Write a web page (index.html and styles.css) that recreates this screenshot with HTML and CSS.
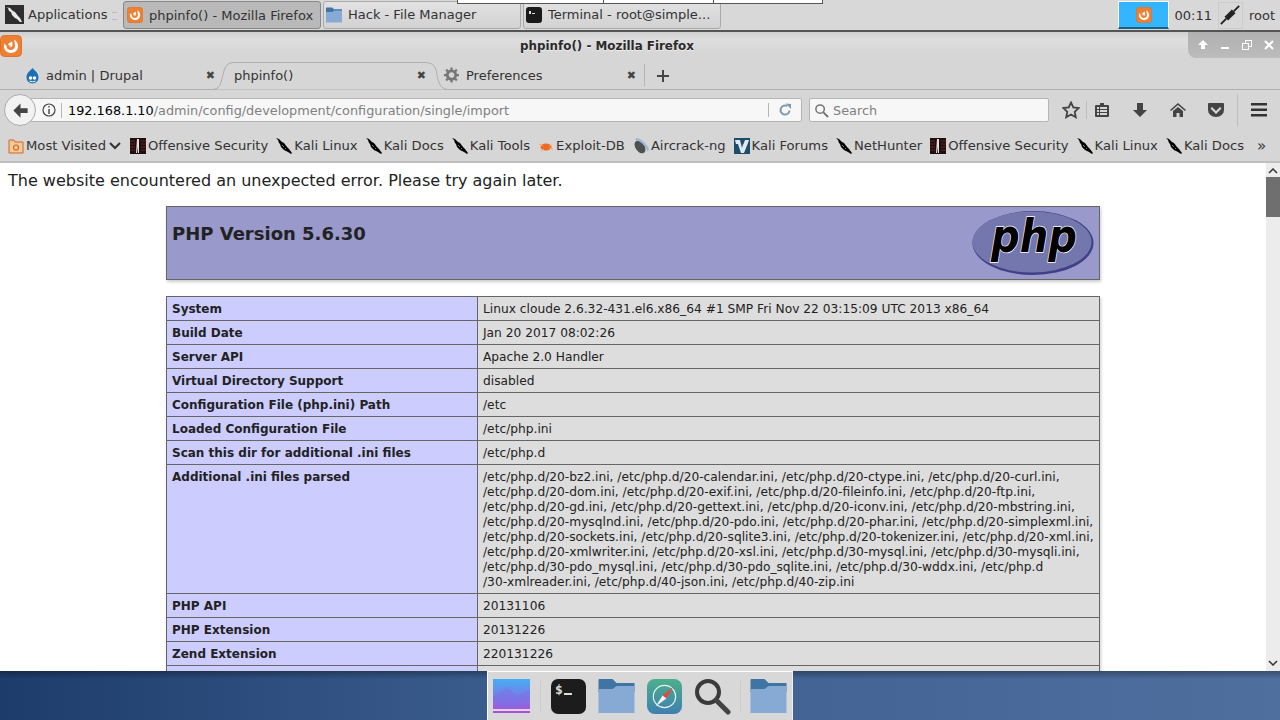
FILE: index.html
```html
<!DOCTYPE html>
<html lang="en">
<head>
  <meta charset="UTF-8" />
  <title>phpinfo() - Mozilla Firefox</title>
  <link rel="stylesheet" href="styles.css">
</head>
<body>

  <!-- shared icons -->
  <svg class="defs" width="0" height="0">
    <symbol id="fox" viewBox="0 0 22 22">
      <rect x="0.5" y="0.5" width="21" height="21" rx="4" fill="#ee8034" stroke="#dd7428"/>
      <path d="M14 4.500c2.500 1.500 4 3.800 4 6.800 0 4-3.200 6.700-7 6.700-3.500 0-6.200-2.300-7-5.500-.3-1.500 0-3 .8-4.200.2 1.300.8 2 1.700 2.300-.2 2.500 1.500 4.500 4.300 4.500 2.500 0 4.200-1.800 4.200-4 0-2.500-.7-4.800-1-6.600z" fill="#fff"/>
      <path d="M8 9.500c1-1.500 2.500-2.500 4-3 .5 1.500 1 3 .3 4.500-.8 1.300-2.500 1.500-3.500.8 1.200 0 2-.5 2.300-1.300-1 .3-2 .2-2.800-1z" fill="#fff"/>
    </symbol>
    <symbol id="kali" viewBox="0 0 16 16">
      <path d="M0 0l3 1 3 3 2 1 3 4 2 2 3 4-1 1-3-2-2-1-2-1-3-3-1-3-1-1-1-3z" fill="#000"/>
      <path d="M6 7l2 2M9 10l1 1" stroke="#999" stroke-width="0.800"/>
    </symbol>
    <symbol id="offsec" viewBox="0 0 16 16">
      <rect width="16" height="16" fill="#1c0f0f"/>
      <path d="M0 3h5M0 6h5M0 9h5M0 12h5M11 3h5M11 6h5M11 9h5M11 12h5" stroke="#6e2020"/>
      <path d="M7 1h2v14H8l-.5-6L7 15H6z" fill="#e8e0e0"/>
    </symbol>
    <symbol id="folder" viewBox="0 0 36 34">
      <path d="M0 1a1 1 0 0 1 1-1h13l4 4h18v9H0z" fill="#3f74a3"/>
      <path d="M0 10h14l4-3h18v27H0z" fill="#86aad4"/>
    </symbol>
  </svg>

  <!-- desktop panel -->
  <div class="panel">
    <div class="apps">
      <svg class="apps-icon" viewBox="0 0 19 19">
        <rect width="19" height="19" fill="#2e2e2e"/>
        <path d="M1 2l4 1 3 3 2 1 3 4 2 2 2 4-2 0-3-3-2-1-3-3-1-3-2-1-1-3z" fill="#e8e8e8"/>
      </svg>
      <span>Applications</span>
    </div>
    <span class="grip"></span>
    <div class="task active">
      <svg class="task-icon"><use href="#fox"/></svg>
      <span>phpinfo() - Mozilla Firefox</span>
    </div>
    <div class="task">
      <svg class="task-icon"><use href="#folder"/></svg>
      <span>Hack - File Manager</span>
    </div>
    <div class="task">
      <svg class="task-icon" viewBox="0 0 16 16">
        <rect width="16" height="16" rx="3" fill="#1a1a1a"/>
        <path d="M3 4h2v3H3zM6 6h3v1H6z" fill="#ddd"/>
      </svg>
      <span>Terminal - root@simple...</span>
    </div>
    <div class="tray">
      <div class="pager"><svg class="task-icon"><use href="#fox"/></svg></div>
      <span class="clock">00:11</span>
      <div class="plug">
        <svg viewBox="0 0 24 24" width="22" height="22">
          <path d="M2 22l6-6M16 8l6-6" stroke="#222" stroke-width="2"/>
          <path d="M6 14l4-4 4 4-4 4z M10 10l4-4 4 4-4 4z" fill="#222"/>
        </svg>
      </div>
      <span class="user">root</span>
    </div>
    <div class="popup-edge">
      <i></i><i></i>
    </div>
  </div>

  <!-- firefox window -->
  <div class="window">
    <div class="titlebar">
      <svg class="win-icon"><use href="#fox"/></svg>
      <span class="win-title">phpinfo() - Mozilla Firefox</span>
      <div class="win-btns">
        <svg viewBox="0 0 12 12" width="12" height="12"><path d="M6 1l5 5H8v4H4V6H1z" fill="#fff"/></svg>
        <svg viewBox="0 0 12 12" width="12" height="12"><path d="M2 8h8v2H2z" fill="#fff"/></svg>
        <svg viewBox="0 0 12 12" width="12" height="12"><path d="M4 1h7v7H8v3H1V4h3zM5 2v2h3v3h2V2zM2 5v5h5V5z" fill="#fff"/></svg>
        <svg viewBox="0 0 12 12" width="12" height="12"><path d="M2 2l8 8M10 2l-8 8" stroke="#fff" stroke-width="2"/></svg>
      </div>
    </div>

    <div class="tabs">
      <svg class="tab-shape" viewBox="0 0 240 28" width="240" height="28">
        <path d="M0 27.500c9 0 9-8 11-15C13 4 15 .5 23 .5h190c8 0 11 4 12 12 1 8 4 15 11 15" fill="#d6d6d6" stroke="#aeaeae"/>
      </svg>
      <div class="tab tab-first">
        <svg class="tab-icon" viewBox="0 0 14 16">
          <path d="M7 0c1 2 6 4 6 9.500A6 6 0 0 1 1 9.500C1 4 6 2 7 0z" fill="#1a6fb5"/>
          <circle cx="5" cy="10" r="1.800" fill="#fff"/><circle cx="9" cy="10" r="1.800" fill="#fff"/>
          <path d="M4 13c2 1 4 1 6 0" stroke="#fff" fill="none"/>
        </svg>
        <span class="tab-label">admin | Drupal</span>
        <span class="tab-close">✖</span>
      </div>
      <div class="tab tab-active">
        <span class="tab-label">phpinfo()</span>
        <span class="tab-close">✖</span>
      </div>
      <div class="tab tab-prefs">
        <svg class="tab-icon" viewBox="0 0 16 16">
          <circle cx="8" cy="8" r="4.500" fill="none" stroke="#777" stroke-width="3"/>
          <path d="M8 0v3M8 13v3M0 8h3M13 8h3M2.300 2.300l2 2M11.700 11.700l2 2M13.700 2.300l-2 2M4.300 11.700l-2 2" stroke="#777" stroke-width="2.400"/>
        </svg>
        <span class="tab-label">Preferences</span>
        <span class="tab-close">✖</span>
      </div>
      <div class="tab-new">
        <svg viewBox="0 0 14 14" width="14" height="14"><path d="M7 1v12M1 7h12" stroke="#444" stroke-width="2"/></svg>
      </div>
    </div>

    <div class="navbar">
      <div class="back">
        <svg viewBox="0 0 16 16" width="19" height="19"><path d="M8 2L2 8l6 6v-4h6V6H8z" fill="#444"/></svg>
      </div>
      <div class="urlbar">
        <svg class="info" viewBox="0 0 14 14" width="14" height="14">
          <circle cx="7" cy="7" r="6" fill="none" stroke="#444" stroke-width="1.200"/>
          <path d="M6.300 3h1.400v1.500H6.300zM6.300 6h1.400v5H6.300z" fill="#444"/>
        </svg>
        <span class="url"><b>192.168.1.10</b>/admin/config/development/configuration/single/import</span>
        <svg class="reload" viewBox="0 0 14 14" width="14" height="14">
          <path d="M11.500 7.500A4.500 4.500 0 1 1 9 3" fill="none" stroke="#7f99b3" stroke-width="2"/>
          <path d="M7.500 0.500L13 1v5z" fill="#7f99b3"/>
        </svg>
      </div>
      <div class="searchbar">
        <svg viewBox="0 0 16 16" width="15" height="15">
          <circle cx="6.500" cy="6.500" r="4.500" fill="none" stroke="#777" stroke-width="1.600"/>
          <path d="M10 10l5 5" stroke="#777" stroke-width="2.200"/>
        </svg>
        <span>Search</span>
      </div>
      <div class="nav-icons">
        <svg viewBox="0 0 18 18" width="18" height="18"><path d="M9 1.500l2.300 5 5.400.6-4 3.700 1.100 5.400L9 13.500l-4.800 2.700 1.100-5.400-4-3.700 5.400-.6z" fill="none" stroke="#444" stroke-width="1.800"/></svg>
        <span class="nav-sep"></span>
        <svg class="n-list" viewBox="0 0 16 16" width="16" height="16"><path d="M2 3h4V1h4v2h4a1 1 0 0 1 1 1v10a1 1 0 0 1-1 1H2a1 1 0 0 1-1-1V4a1 1 0 0 1 1-1zM3 5v2h2V5zm3 0v2h7V5zM3 8v2h2V8zm3 0v2h7V8zM3 11v2h2v-2zm3 0v2h7v-2z" fill="#444" fill-rule="evenodd"/></svg>
        <svg class="n-down" viewBox="0 0 16 16" width="16" height="16"><path d="M5 1h6v7h4l-7 7-7-7h4z" fill="#444"/></svg>
        <svg class="n-home" viewBox="0 0 16 16" width="16" height="16"><path d="M8 1l8 7-1 1-7-6-7 6-1-1zM3 9l5-4 5 4v6H9.500v-4h-3v4H3z" fill="#444"/></svg>
        <svg class="n-pocket" viewBox="0 0 16 16" width="16" height="16"><path d="M1 1h14a1 1 0 0 1 1 1v6a8 7 0 0 1-16 0V2a1 1 0 0 1 1-1zm3 4L8 9l4-4 1.500 1.500L8 12 2.500 6.500z" fill="#444" fill-rule="evenodd"/></svg>
        <span class="nav-sep nav-sep-tall"></span>
        <svg class="n-menu" viewBox="0 0 16 16" width="16" height="16"><path d="M0 1h16v2.500H0zM0 6.500h16V9H0zM0 12h16v2.500H0z" fill="#333"/></svg>
      </div>
    </div>

    <div class="bookmarks">
      <div class="bm bm-folder">
        <svg class="bm-icon" viewBox="0 0 16 16">
          <path d="M1 2h5l1 2h8v11H1z" fill="#f2c99a" stroke="#d2691e"/>
          <circle cx="8" cy="9.500" r="2.500" fill="none" stroke="#d2691e" stroke-width="1.200"/>
        </svg>
        <span>Most Visited</span>
        <svg class="chev" viewBox="0 0 12 8" width="12" height="8"><path d="M1 1l5 5 5-5" fill="none" stroke="#333" stroke-width="2"/></svg>
      </div>
      <div class="bm"><svg class="bm-icon"><use href="#offsec"/></svg><span>Offensive Security</span></div>
      <div class="bm"><svg class="bm-icon"><use href="#kali"/></svg><span>Kali Linux</span></div>
      <div class="bm"><svg class="bm-icon"><use href="#kali"/></svg><span>Kali Docs</span></div>
      <div class="bm"><svg class="bm-icon"><use href="#kali"/></svg><span>Kali Tools</span></div>
      <div class="bm">
        <svg class="bm-icon" viewBox="0 0 16 16">
          <ellipse cx="8" cy="9" rx="5.500" ry="3.500" fill="#ee6a1f"/>
          <path d="M1 6l4 2M3 13l3-2M14 7l-3 1M15 11l-4-1" stroke="#f4a070" stroke-width="1"/>
        </svg>
        <span>Exploit-DB</span>
      </div>
      <div class="bm">
        <svg class="bm-icon" viewBox="0 0 16 16">
          <ellipse cx="7" cy="9" rx="4.500" ry="7" transform="rotate(-35 7 9)" fill="#4d5250"/>
          <path d="M3 0c5 0 10 5 13 11l-1.500 3C13 8 8 3 2 2z" fill="#9db8d6"/>
        </svg>
        <span>Aircrack-ng</span>
      </div>
      <div class="bm">
        <svg class="bm-icon" viewBox="0 0 16 16">
          <rect width="16" height="16" fill="#1e4c6c"/>
          <path d="M1 2h5l2 8 2-8h5l-1 3-4 10H7L4 6H2z" fill="#dfe9ef"/>
          <path d="M8 2h3l-2 5z" fill="#1e4c6c"/>
        </svg>
        <span>Kali Forums</span>
      </div>
      <div class="bm"><svg class="bm-icon"><use href="#kali"/></svg><span>NetHunter</span></div>
      <div class="bm"><svg class="bm-icon"><use href="#offsec"/></svg><span>Offensive Security</span></div>
      <div class="bm"><svg class="bm-icon"><use href="#kali"/></svg><span>Kali Linux</span></div>
      <div class="bm"><svg class="bm-icon"><use href="#kali"/></svg><span>Kali Docs</span></div>
      <span class="bm-more">»</span>
    </div>

    <div class="viewport">
      <div class="page">
        <p class="error-msg">The website encountered an unexpected error. Please try again later.</p>
        <div class="phpinfo">
          <div class="php-head">
            <h1>PHP Version 5.6.30</h1>
            <svg class="php-logo" viewBox="0 0 122 66" width="122" height="66">
              <ellipse cx="61" cy="33" rx="60.500" ry="32" fill="#3f4184"/>
              <ellipse cx="60" cy="32" rx="59.500" ry="30.500" fill="#7377ad"/>
              <text class="php-word" x="19" y="42" textLength="86" lengthAdjust="spacingAndGlyphs">php</text>
            </svg>
          </div>
          <table class="info-table">
            <tr><td class="k">System</td><td class="v">Linux cloude 2.6.32-431.el6.x86_64 #1 SMP Fri Nov 22 03:15:09 UTC 2013 x86_64</td></tr>
            <tr><td class="k">Build Date</td><td class="v">Jan 20 2017 08:02:26</td></tr>
            <tr><td class="k">Server API</td><td class="v">Apache 2.0 Handler</td></tr>
            <tr><td class="k">Virtual Directory Support</td><td class="v">disabled</td></tr>
            <tr><td class="k">Configuration File (php.ini) Path</td><td class="v">/etc</td></tr>
            <tr><td class="k">Loaded Configuration File</td><td class="v">/etc/php.ini</td></tr>
            <tr><td class="k">Scan this dir for additional .ini files</td><td class="v">/etc/php.d</td></tr>
            <tr><td class="k">Additional .ini files parsed</td><td class="v">/etc/php.d/20-bz2.ini, /etc/php.d/20-calendar.ini, /etc/php.d/20-ctype.ini, /etc/php.d/20-curl.ini,<br>/etc/php.d/20-dom.ini, /etc/php.d/20-exif.ini, /etc/php.d/20-fileinfo.ini, /etc/php.d/20-ftp.ini,<br>/etc/php.d/20-gd.ini, /etc/php.d/20-gettext.ini, /etc/php.d/20-iconv.ini, /etc/php.d/20-mbstring.ini,<br>/etc/php.d/20-mysqlnd.ini, /etc/php.d/20-pdo.ini, /etc/php.d/20-phar.ini, /etc/php.d/20-simplexml.ini,<br>/etc/php.d/20-sockets.ini, /etc/php.d/20-sqlite3.ini, /etc/php.d/20-tokenizer.ini, /etc/php.d/20-xml.ini,<br>/etc/php.d/20-xmlwriter.ini, /etc/php.d/20-xsl.ini, /etc/php.d/30-mysql.ini, /etc/php.d/30-mysqli.ini,<br>/etc/php.d/30-pdo_mysql.ini, /etc/php.d/30-pdo_sqlite.ini, /etc/php.d/30-wddx.ini, /etc/php.d<br>/30-xmlreader.ini, /etc/php.d/40-json.ini, /etc/php.d/40-zip.ini</td></tr>
            <tr><td class="k">PHP API</td><td class="v">20131106</td></tr>
            <tr><td class="k">PHP Extension</td><td class="v">20131226</td></tr>
            <tr><td class="k">Zend Extension</td><td class="v">220131226</td></tr>
            <tr class="row-cut"><td class="k"></td><td class="v"></td></tr>
          </table>
        </div>
      </div>
      <div class="scrollbar">
        <svg viewBox="0 0 10 6" width="10" height="6"><path d="M1 5l4-4 4 4" fill="none" stroke="#333" stroke-width="1.500"/></svg>
        <div class="thumb"></div>
        <svg class="sb-down" viewBox="0 0 10 6" width="10" height="6"><path d="M1 1l4 4 4-4" fill="none" stroke="#333" stroke-width="1.500"/></svg>
      </div>
    </div>
  </div>

  <!-- desktop and dock -->
  <div class="desktop">
    <div class="dock">
      <svg class="d-wall" viewBox="0 0 37 34" width="37" height="34">
        <defs>
          <linearGradient id="wall" x1="0" y1="0" x2="0" y2="1">
            <stop offset="0" stop-color="#45aef5"/><stop offset="1" stop-color="#a94fd8"/>
          </linearGradient>
        </defs>
        <rect width="37" height="34" fill="url(#wall)"/>
        <path d="M0 18L14 8l10 9 13-6v8L22 28H8z" fill="#7a6fe8" opacity=".5"/>
        <rect y="30" width="37" height="2" fill="#e4d5f4"/>
      </svg>
      <span class="d-sep"></span>
      <svg class="d-term" viewBox="0 0 35 35" width="35" height="35">
        <rect width="35" height="35" rx="7" fill="#1c1c1c"/>
        <text class="d-prompt" x="4" y="15">$</text>
        <rect x="13" y="14" width="8" height="2" fill="#ddd"/>
      </svg>
      <svg class="d-folder" width="37" height="34"><use href="#folder"/></svg>
      <svg class="d-safari" viewBox="0 0 36 36" width="35" height="35">
        <defs>
          <linearGradient id="saf" x1="0" y1="0" x2="0" y2="1">
            <stop offset="0" stop-color="#4bb08a"/><stop offset="1" stop-color="#3f7fb0"/>
          </linearGradient>
        </defs>
        <rect width="36" height="36" rx="8" fill="url(#saf)"/>
        <circle cx="18" cy="18" r="11.500" fill="none" stroke="#e8f2f2" stroke-width="1.200"/>
        <path d="M27 8l-7 12-4-3z" fill="#e8463f"/>
        <path d="M9 28l7-11 4 3z" fill="#f4f4f4"/>
      </svg>
      <svg class="d-search" viewBox="0 0 38 38" width="38" height="38">
        <circle cx="15" cy="15" r="11" fill="none" stroke="#3a3a3a" stroke-width="4"/>
        <path d="M23 23l12 12" stroke="#444" stroke-width="5" stroke-linecap="round"/>
      </svg>
      <span class="d-sep d-sep2"></span>
      <svg class="d-folder-end" width="37" height="34"><use href="#folder"/></svg>
    </div>
  </div>

</body>
</html>
```

FILE: styles.css
```css
* {
  box-sizing: border-box;
}

html, body {
  margin: 0;
  height: 720px;
  overflow: hidden;
}

body {
  font-family: 'DejaVu Sans', sans-serif;
  font-size: 13px;
  color: #333;
  background: #d6d6d6;
  display: flex;
  flex-direction: column;
}

.defs {
  position: absolute;
}

/* desktop panel */
.panel {
  position: relative;
  height: 32px;
  flex: none;
  display: flex;
  align-items: flex-start;
  background: #d8d8d8;
  border-bottom: 2px solid #555;
  padding-top: 1px;
}

.apps {
  display: flex;
  align-items: center;
  gap: 4px;
  height: 27px;
  padding-left: 5px;
  width: 112px;
}

.apps-icon {
  width: 19px;
  height: 19px;
}

.grip {
  width: 5px;
  height: 8px;
  margin: 11px 6px 0 0;
  border-top: 1px solid #bbb;
  border-bottom: 1px solid #bbb;
}

.task {
  width: 198px;
  height: 28px;
  margin-right: 2px;
  display: flex;
  align-items: center;
  gap: 6px;
  padding: 0 0 1px 2px;
  border: 1px solid #aaa;
  border-radius: 3px;
  background: linear-gradient(#e2e2e2, #d2d2d2);
  white-space: nowrap;
}

.task.active {
  padding: 0 0 0 3px;
  background: #b9b9b9;
  border-color: #888;
}

.task-icon {
  width: 16px;
  height: 16px;
  flex: none;
}

.tray {
  margin-left: auto;
  display: flex;
  align-items: center;
  height: 28px;
  padding-right: 5px;
}

.pager {
  width: 51px;
  height: 28px;
  display: flex;
  align-items: center;
  justify-content: center;
  background: #33b5ff;
  border: 1px solid #fff;
  border-bottom: 2px solid #1d5f86;
}

.clock {
  margin-left: 5px;
}

.plug {
  width: 25px;
  height: 27px;
  margin: 0 6px;
  display: flex;
  align-items: center;
  justify-content: center;
  border: 1px solid #ccc;
}

/* edge of a tooltip cut off by the top of the screen */
.popup-edge {
  position: absolute;
  left: 457px;
  top: 0;
  width: 366px;
  height: 4px;
  background: #fff;
  border: 1px solid #555;
  border-top: 0;
}

.popup-edge i {
  position: absolute;
  top: 0;
  width: 1px;
  height: 3px;
  background: #555;
}

.popup-edge i:nth-child(1) { left: 145px; }
.popup-edge i:nth-child(2) { left: 255px; }

/* firefox window */
.window {
  height: 639px;
  flex: none;
  display: flex;
  flex-direction: column;
  background: #d6d6d6;
}

.titlebar {
  position: relative;
  height: 30px;
  flex: none;
  display: flex;
  align-items: center;
  justify-content: center;
  padding-bottom: 2px;
  background: linear-gradient(#d0d0d0, #dedede 25%, #d6d6d6 70%);
}

.win-icon {
  position: absolute;
  left: 0;
  top: 3px;
  width: 22px;
  height: 22px;
}

.win-title {
  font-weight: bold;
  font-size: 11.900px;
  color: #2a2a2a;
  margin-left: -66px;
  text-shadow: 0 1px 0 #eee;
}

.win-btns {
  position: absolute;
  right: 0;
  top: 0;
  width: 92px;
  height: 26px;
  display: flex;
  align-items: center;
  gap: 10px;
  padding-left: 9px;
  background: linear-gradient(#b0b0b0, #bcbcbc);
  border-bottom-left-radius: 8px;
}

.tabs {
  position: relative;
  height: 28px;
  flex: none;
  display: flex;
  border-bottom: 1px solid #aeaeae;
  font-size: 13px;
}

.tab-shape {
  position: absolute;
  left: 212px;
  top: 0;
}

.tab {
  display: flex;
  align-items: center;
  position: relative;
  height: 27px;
}

.tab-first {
  width: 222px;
  padding-left: 25px;
}

.tab-active {
  width: 215px;
  padding-left: 12px;
}

.tab-prefs {
  width: 208px;
  height: 22px;
  margin-top: 2px;
  padding-left: 7px;
  border-right: 1px solid #b4b4b4;
}

.tab-icon {
  width: 15px;
  height: 16px;
  margin-right: 7px;
  flex: none;
}

.tab-first .tab-icon {
  margin-right: 6px;
}

.tab-close {
  position: absolute;
  right: 6px;
  font-size: 11px;
  color: #444;
}

.tab-first .tab-close { right: 7px; }
.tab-active .tab-close { right: 11px; }
.tab-prefs .tab-close { right: 8px; }

.tab-new {
  display: flex;
  align-items: center;
  margin-left: 11px;
  height: 27px;
}

.navbar {
  height: 40px;
  flex: none;
  display: flex;
  align-items: center;
  position: relative;
  padding-left: 30px;
}

.back {
  position: absolute;
  left: 4px;
  top: 4px;
  width: 32px;
  height: 32px;
  border-radius: 50%;
  border: 1px solid #aaa;
  background: #f2f2f2;
  display: flex;
  align-items: center;
  justify-content: center;
  z-index: 1;
}

.urlbar {
  width: 772px;
  height: 24px;
  display: flex;
  align-items: center;
  padding-left: 11px;
  background: #f7f7f7;
  border: 1px solid #b5b5b5;
  border-radius: 2px;
  font-size: 12.840px;
  color: #808080;
  white-space: nowrap;
}

.url {
  flex: 1;
  margin-left: 5px;
  padding-left: 6px;
  border-left: 1px solid #b5b5b5;
}

.url b {
  font-weight: normal;
  color: #000;
}

.reload {
  box-sizing: content-box;
  padding: 0 9px;
  border-left: 1px solid #b5b5b5;
}

.searchbar {
  width: 240px;
  height: 24px;
  margin-left: 7px;
  display: flex;
  align-items: center;
  gap: 4px;
  padding-left: 4px;
  background: #f7f7f7;
  border: 1px solid #b5b5b5;
  border-radius: 2px;
  font-size: 12.840px;
  color: #808080;
}

.nav-icons {
  display: flex;
  align-items: center;
  margin-left: 13px;
}

.nav-sep {
  width: 1px;
  height: 18px;
  margin: 0 7px 0 6px;
  background: #bdbdbd;
}

.nav-sep-tall {
  height: 32px;
  margin: 0 13px;
}

.n-down { margin-left: 22px; }
.n-home { margin-left: 22px; }
.n-pocket { margin-left: 22px; }

.bookmarks {
  height: 33px;
  flex: none;
  display: flex;
  align-items: center;
  padding-left: 8px;
  gap: 8px;
  font-size: 13.150px;
  white-space: nowrap;
  border-bottom: 2px solid #bfbfbf;
}

.bm {
  display: flex;
  align-items: center;
  gap: 2px;
}

.bm-icon {
  width: 16px;
  height: 16px;
  flex: none;
}

.bm-folder {
  margin-right: 1px;
}

.chev {
  margin-left: 1px;
}

.bm-more {
  margin-left: 5px;
  font-size: 15px;
}

/* page area */
.viewport {
  flex: 1;
  min-height: 0;
  display: flex;
  background: #fff;
  overflow: hidden;
}

.page {
  flex: 1;
  overflow: hidden;
  color: #222;
}

.error-msg {
  margin: 8px 8px 0;
  font-size: 16px;
  line-height: 19px;
}

.phpinfo {
  width: 934px;
  margin: 16px auto 0;
  font-size: 12px;
  line-height: 15px;
}

.php-head {
  height: 74px;
  padding: 5px;
  display: flex;
  justify-content: space-between;
  background: #9999cc;
  border: 1px solid #666;
  box-shadow: 1px 2px 3px #ccc;
}

.php-head h1 {
  margin: 11px 0 0;
  font-size: 18px;
  line-height: 21px;
  color: #222;
}

.php-logo {
  flex: none;
  margin-top: -2px;
}

.php-word {
  font-family: 'DejaVu Sans', sans-serif;
  font-weight: bold;
  font-style: italic;
  font-size: 46px;
  fill: #000;
  stroke: #fff;
  stroke-width: 1.400;
  paint-order: stroke;
}

.info-table {
  width: 934px;
  margin-top: 16px;
  border-collapse: collapse;
  table-layout: fixed;
  box-shadow: 1px 2px 3px #ccc;
}

.info-table td {
  border: 1px solid #666;
  padding: 5px 5px 3px;
  vertical-align: top;
  line-height: 15px;
}

.row-cut td {
  height: 24px;
}

.k {
  width: 311px;
  background: #ccccff;
  font-weight: bold;
}

.v {
  background: #dddddd;
  font-size: 12.230px;
  white-space: nowrap;
}

.scrollbar {
  width: 14px;
  flex: none;
  position: relative;
  display: flex;
  flex-direction: column;
  align-items: center;
  background: #ececec;
  padding-top: 5px;
}

.thumb {
  width: 14px;
  height: 40px;
  margin-top: 3px;
  background: #6f6f6f;
}

.sb-down {
  margin-top: auto;
  margin-bottom: 5px;
}

/* desktop and dock */
.desktop {
  flex: 1;
  display: flex;
  justify-content: center;
  background: linear-gradient(#0000004d, transparent 8px), linear-gradient(90deg, #1d3c6c, #3a5c8c 38%, #4f6f9f);
}

.dock {
  width: 306px;
  height: 49px;
  display: flex;
  align-items: center;
  padding-left: 5px;
  background: #d8d8d8;
  border-top: 1px solid #fff;
  border-left: 1px solid #fff;
  border-right: 1px solid #eee;
}

.d-sep {
  width: 1px;
  height: 30px;
  margin: 0 10px;
  background: #ccc;
}

.d-folder { margin-left: 12px; }
.d-safari { margin-left: 12px; }
.d-search { margin-left: 11px; }
.d-sep2 { margin: 0 9px; }

.d-prompt {
  font-family: 'DejaVu Sans Mono', monospace;
  font-weight: bold;
  font-size: 13px;
  fill: #ddd;
}
```
